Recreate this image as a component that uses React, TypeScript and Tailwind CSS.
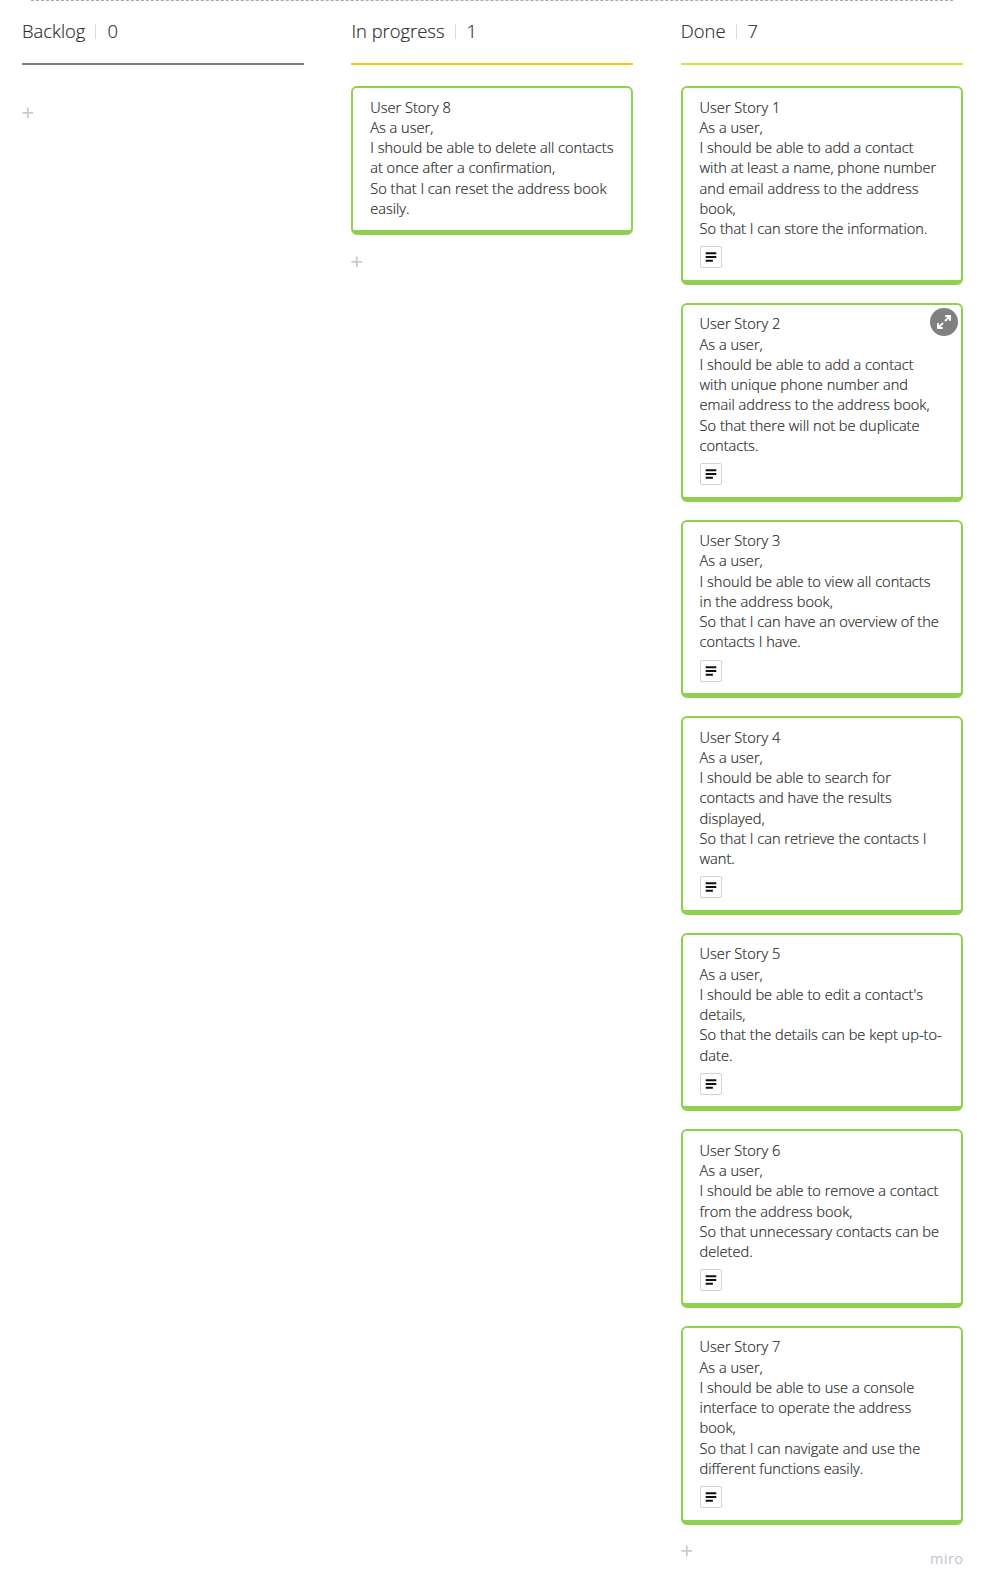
type Story = { id: number; lines: string[]; note?: boolean; expandable?: boolean };

const inProgress: Story[] = [
  {
    id: 8,
    lines: [
      'As a user,',
      'I should be able to delete all contacts',
      'at once after a confirmation,',
      'So that I can reset the address book',
      'easily.',
    ],
  },
];

const done: Story[] = [
  {
    id: 1,
    note: true,
    lines: [
      'As a user,',
      'I should be able to add a contact',
      'with at least a name, phone number',
      'and email address to the address',
      'book,',
      'So that I can store the information.',
    ],
  },
  {
    id: 2,
    note: true,
    expandable: true,
    lines: [
      'As a user,',
      'I should be able to add a contact',
      'with unique phone number and',
      'email address to the address book,',
      'So that there will not be duplicate',
      'contacts.',
    ],
  },
  {
    id: 3,
    note: true,
    lines: [
      'As a user,',
      'I should be able to view all contacts',
      'in the address book,',
      'So that I can have an overview of the',
      'contacts I have.',
    ],
  },
  {
    id: 4,
    note: true,
    lines: [
      'As a user,',
      'I should be able to search for',
      'contacts and have the results',
      'displayed,',
      'So that I can retrieve the contacts I',
      'want.',
    ],
  },
  {
    id: 5,
    note: true,
    lines: [
      'As a user,',
      "I should be able to edit a contact's",
      'details,',
      'So that the details can be kept up-to-',
      'date.',
    ],
  },
  {
    id: 6,
    note: true,
    lines: [
      'As a user,',
      'I should be able to remove a contact',
      'from the address book,',
      'So that unnecessary contacts can be',
      'deleted.',
    ],
  },
  {
    id: 7,
    note: true,
    lines: [
      'As a user,',
      'I should be able to use a console',
      'interface to operate the address',
      'book,',
      'So that I can navigate and use the',
      'different functions easily.',
    ],
  },
];

function NoteBadge() {
  return (
    <div className="mt-[7.8px] flex h-[22px] w-[22px] items-center justify-center rounded-[2px] border border-[#d2d2d2] bg-white">
      <svg width="12" height="10" viewBox="0 0 12 10" className="block" stroke="#111" strokeWidth="2">
        <path d="M.7 1.2h10.6M.7 5h10.6M.7 8.8h7.2" />
      </svg>
    </div>
  );
}

function ExpandButton() {
  return (
    <button className="absolute top-[3px] right-[3px] flex h-[28px] w-[28px] items-center justify-center rounded-full bg-[#808080]">
      <svg width="16" height="16" viewBox="0 0 16 16" fill="none" stroke="#fff" strokeWidth="2">
        <path d="M9.2 2h4.8v4.8M14 2L9 7M6.8 14H2V9.2M2 14l5-5" />
      </svg>
    </button>
  );
}

function Card({ story }: { story: Story }) {
  return (
    <article className="relative rounded-[6px] border-2 border-b-[5px] border-[#8fd14f] bg-white pt-[8.4px] pb-[11.6px] pl-[16.8px] text-[14.6px] leading-[20.27px] font-light whitespace-nowrap text-[#2a2a2a] [-webkit-text-stroke:0.2px_#2a2a2a]">
      <h2>User Story {story.id}</h2>
      {story.lines.map((line) => (
        <p key={line}>{line}</p>
      ))}
      {story.note && <NoteBadge />}
      {story.expandable && <ExpandButton />}
    </article>
  );
}

function AddButton() {
  return (
    <button className="block h-[12px] w-[12px]">
      <svg width="12" height="12" viewBox="0 0 12 12" className="block" stroke="#cbcbcb" strokeWidth="1.8">
        <path d="M5.8 .5v10.8M.4 5.9h10.8" />
      </svg>
    </button>
  );
}

function Column({ title, rule, stories }: { title: string; rule: string; stories: Story[] }) {
  return (
    <section className="w-[282px]">
      <header className={`flex h-[65px] items-center border-b-2 pb-[1px] text-[18.4px] font-light text-[#2a2a2a] [-webkit-text-stroke:0.15px_#2a2a2a] ${rule}`}>
        <span>{title}</span>
        <span className="mr-[11px] ml-[10px] h-[15px] w-px bg-[#dcdcdc]" />
        <span>{stories.length}</span>
      </header>
      <div className="flex flex-col gap-[18.1px] pt-[21.3px]">
        {stories.map((s) => (
          <Card key={s.id} story={s} />
        ))}
      </div>
      <div className="pt-[20.8px]">
        <AddButton />
      </div>
    </section>
  );
}

export default function App() {
  return (
    <main className="relative h-[1586px] w-[984px] overflow-hidden bg-white font-['Open_Sans',sans-serif]">
      <div className="absolute top-0 left-[31px] w-[922px] border-t border-dashed border-[#a8a8a8]" />
      <div className="flex gap-[47.4px] pl-[22px]">
        <Column title="Backlog" rule="border-[#808080]" stories={[]} />
        <Column title="In progress" rule="border-[#fac710]" stories={inProgress} />
        <Column title="Done" rule="border-[#cee741]" stories={done} />
      </div>
      <div className="absolute top-[1547px] left-[930px] text-[14.5px] leading-[24px] tracking-[0.4px] text-[#c4c2d4]">
        miro
      </div>
    </main>
  );
}
